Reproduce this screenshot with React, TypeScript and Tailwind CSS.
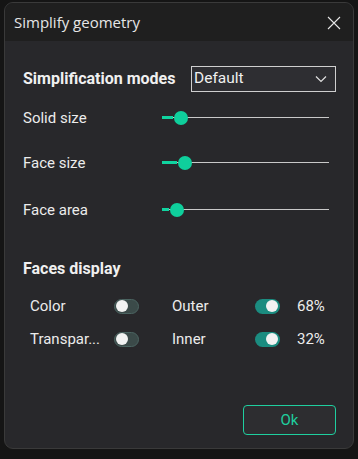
import React from "react";

function Slider({ pct }: { pct: number }) {
  return (
    <div className="relative w-[167px] h-[14px]">
      <div className="absolute left-0 right-0 top-[6px] h-[1px] bg-[#c9c9c9]" />
      <div className="absolute left-0 top-[5px] h-[3px] bg-[#10d4a0]" style={{ width: `${pct}px` }} />
      <div
        className="absolute top-0 w-[14px] h-[14px] rounded-full bg-[#0fcf9c]"
        style={{ left: `${pct + 1}px` }}
      />
    </div>
  );
}

function Toggle({ on }: { on: boolean }) {
  return on ? (
    <div className="w-[25px] h-[15px] rounded-full bg-[#1b8c80] flex items-center justify-end pr-[2px]">
      <div className="w-[12px] h-[12px] rounded-full bg-[#f2f2f2]" />
    </div>
  ) : (
    <div className="w-[25px] h-[15px] rounded-full bg-[#3b4a49] border border-[#4b6461] flex items-center pl-[1px]">
      <div className="w-[12px] h-[12px] rounded-full bg-[#f2f2f2]" />
    </div>
  );
}

export default function App() {
  const font = { fontFamily: "Roboto, 'Liberation Sans', sans-serif" };
  return (
    <div className="w-[358px] h-[459px] bg-[#151515] pt-[2px] pl-[4px]" style={font}>
      <div className="w-[350px] h-[447px] rounded-[9px] border border-[#3a3a3a] overflow-hidden flex flex-col bg-[#28282b]">
        <div className="h-[38px] bg-[#1f1f1f] flex items-center justify-between pl-[9px] pr-[12px] shrink-0">
          <span
            className="text-[15px] text-[#e6e6e6]"
            style={{ fontFamily: "'Open Sans', 'Noto Sans', sans-serif" }}
          >
            Simplify geometry
          </span>
          <svg width="14" height="14" viewBox="0 0 14 14" className="mt-[1px]">
            <path d="M1 1L13 13M13 1L1 13" stroke="#e6e6e6" strokeWidth="1.1" />
          </svg>
        </div>
        <div className="flex flex-col pl-[18px] pr-[17px] pt-[25px] flex-1">
          <div className="flex items-center h-[26px] justify-between">
            <span className="text-[16px] font-bold text-[#f0f0f0]">Simplification modes</span>
            <div className="w-[145px] h-[26px] border border-[#cfcfcf] bg-[#2e2e32] flex items-center justify-between pl-[2px] pr-[8px]">
              <span className="text-[15.5px] text-[#f0f0f0]">Default</span>
              <svg width="12" height="8" viewBox="0 0 12 8">
                <path d="M1 1.5L6 6.5L11 1.5" stroke="#e0e0e0" strokeWidth="1.2" fill="none" />
              </svg>
            </div>
          </div>
          <div className="flex items-center h-[20px] mt-[16px]">
            <span className="w-[139px] text-[15px] text-[#ececec]">Solid size</span>
            <Slider pct={11} />
          </div>
          <div className="flex items-center h-[20px] mt-[25px]">
            <span className="w-[139px] text-[15px] text-[#ececec]">Face size</span>
            <Slider pct={15} />
          </div>
          <div className="flex items-center h-[20px] mt-[27px]">
            <span className="w-[139px] text-[15px] text-[#ececec]">Face area</span>
            <Slider pct={7} />
          </div>
          <div className="h-[20px] mt-[39px] flex items-center">
            <span className="text-[16px] font-bold text-[#f0f0f0]">Faces display</span>
          </div>
          <div className="flex items-center h-[20px] mt-[17px] pl-[7px]">
            <span className="w-[84px] text-[15px] text-[#ececec]">Color</span>
            <Toggle on={false} />
            <span className="ml-[33px] w-[83px] text-[15px] text-[#ececec]">Outer</span>
            <Toggle on={true} />
            <span className="ml-[17px] text-[15px] text-[#ececec]">68%</span>
          </div>
          <div className="flex items-center h-[20px] mt-[13px] pl-[7px]">
            <span className="w-[84px] text-[15px] text-[#ececec] whitespace-nowrap">Transpar...</span>
            <Toggle on={false} />
            <span className="ml-[33px] w-[83px] text-[15px] text-[#ececec]">Inner</span>
            <Toggle on={true} />
            <span className="ml-[17px] text-[15px] text-[#ececec]">32%</span>
          </div>
          <div className="flex justify-end mt-[56px]">
            <div className="w-[93px] h-[30px] border border-[#1fcf9f] rounded-[4px] bg-[#2d2d30] flex items-center justify-center">
              <span className="text-[15px] text-[#1fcf9f]">Ok</span>
            </div>
          </div>
        </div>
      </div>
    </div>
  );
}
